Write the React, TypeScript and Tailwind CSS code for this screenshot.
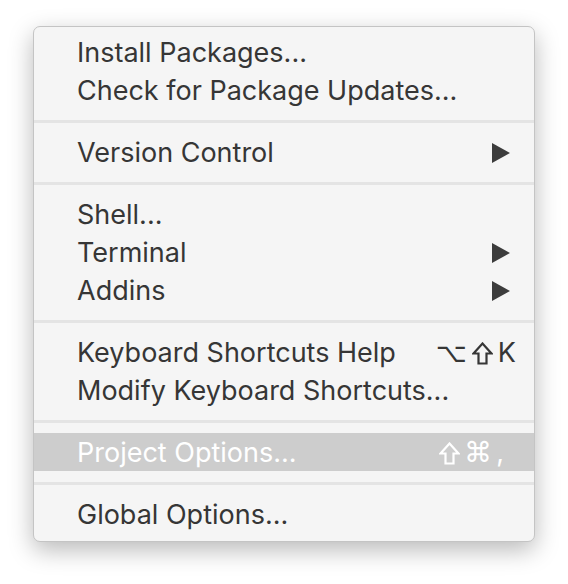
import type { ReactNode } from 'react';

type Item = { label: string; shortcut?: ReactNode; submenu?: boolean; active?: boolean };

function Shift({ color }: { color: string }) {
  return (
    <svg width="21" height="23" viewBox="0 0 21 23" fill="none" stroke={color} strokeWidth="2.2" strokeLinejoin="miter">
      <path d="M10.5 1.5 L19.5 11.5 L14.5 11.5 L14.5 21.5 L6.5 21.5 L6.5 11.5 L1.5 11.5 Z" />
    </svg>
  );
}

function Arrow() {
  return (
    <svg width="18" height="20" viewBox="0 0 18 20" className="fill-[#3c3c3c]">
      <path d="M0 0 L18 10 L0 20 Z" />
    </svg>
  );
}

const groups: Item[][] = [
  [{ label: 'Install Packages...' }, { label: 'Check for Package Updates...' }],
  [{ label: 'Version Control', submenu: true }],
  [{ label: 'Shell...' }, { label: 'Terminal', submenu: true }, { label: 'Addins', submenu: true }],
  [
    {
      label: 'Keyboard Shortcuts Help',
      shortcut: (
        <span className="flex items-center gap-[5px] -mr-[5px]">
          <span className="font-['DejaVu_Sans',sans-serif] text-[27px]">⌥</span>
          <Shift color="#363636" />
          <span>K</span>
        </span>
      ),
    },
    { label: 'Modify Keyboard Shortcuts...' },
  ],
  [
    {
      label: 'Project Options...',
      active: true,
      shortcut: (
        <span className="flex items-center gap-[4px] pr-[7px]">
          <Shift color="#ffffff" />
          <span className="font-['DejaVu_Sans',sans-serif] text-[28px]">⌘</span>
          <span>,</span>
        </span>
      ),
    },
  ],
  [{ label: 'Global Options...' }],
];

export default function App() {
  return (
    <div className="min-h-screen bg-white pl-[33px] pt-[26px] font-['Inter','Liberation_Sans',sans-serif]">
      <div className="w-[502px] rounded-[7px] border border-[#c4c4c4] bg-[#f5f5f5] pt-[6px] pb-[8px] shadow-[0_8px_24px_rgba(0,0,0,0.28)]">
        {groups.map((g, gi) => (
          <div key={gi}>
            {gi > 0 && <div className="mt-[11px] mb-[10px] h-[3px] bg-[#e4e4e4]" />}
            {g.map(it => (
              <div
                key={it.label}
                className={`flex h-[38px] items-center justify-between pt-[2px] pl-[43px] pr-[23px] text-[27px] ${it.active ? 'bg-[#cdcdcd] text-white' : 'text-[#363636]'}`}
              >
                <span>{it.label}</span>
                {it.shortcut}
                {it.submenu && <span className="pr-[1px]"><Arrow /></span>}
              </div>
            ))}
          </div>
        ))}
      </div>
    </div>
  );
}
